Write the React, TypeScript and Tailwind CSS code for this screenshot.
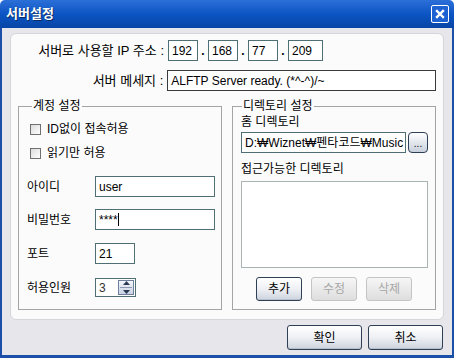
import React from "react";

const font = "font-['Liberation_Sans','Noto_Sans_CJK_KR',sans-serif]";

const Box: React.FC<{ value: string; w: string; dark?: boolean }> = ({ value, w, dark }) => (
  <div
    className={`${w} h-[21px] bg-white border ${dark ? "border-[#3a3a3a]" : "border-[#4f6f74]"} flex items-center px-[3px] text-[12px] text-black leading-none`}
  >
    {value}
  </div>
);

const XpButton: React.FC<{ label: string; w: string; h: string; disabled?: boolean }> = ({ label, w, h, disabled }) => (
  <div
    className={`${w} ${h} rounded-[3px] border flex items-center justify-center text-[12px] ${
      disabled
        ? "border-[#c4c4c4] text-[#a8a8a8] bg-gradient-to-b from-[#f6f6f6] to-[#dedede]"
        : "border-[#2f3f55] text-black bg-gradient-to-b from-[#ffffff] via-[#eef0f4] to-[#cdd3de] shadow-[inset_0_-1px_0_#b8c0cc]"
    }`}
  >
    {label}
  </div>
);

const Check: React.FC<{ label: string }> = ({ label }) => (
  <div className="h-[24px] flex items-center pl-[3px] gap-[6px]">
    <div className="w-[11px] h-[11px] border border-[#707070] bg-gradient-to-br from-[#dcdcdc] to-white" />
    <span>{label}</span>
  </div>
);

const App: React.FC = () => {
  return (
    <div className={`w-[454px] h-[358px] flex flex-col ${font} text-[12px] text-black select-none`}>
      {/* 타이틀 바 */}
      <div className="h-[28px] rounded-t-[5px] bg-gradient-to-b from-[#2b6fd8] via-[#0b55c4] to-[#0845a6] flex items-center justify-between pl-[6px] pr-[5px] shrink-0">
        <span className="text-white font-bold text-[13px] [text-shadow:1px_1px_0_#0a2a66]">서버설정</span>
        <div className="w-[18px] h-[18px] border border-white rounded-[2px] bg-[#1d62d2] flex items-center justify-center">
          <svg width="10" height="10" viewBox="0 0 10 10">
            <path d="M2 2 L8 8 M8 2 L2 8" stroke="white" strokeWidth="2.4" strokeLinecap="square" />
          </svg>
        </div>
      </div>

      {/* 본문 */}
      <div className="flex-1 bg-[#e7e7eb] border-x-[2px] border-b-[3px] border-[#1c4fa8] px-[8px] pt-[5px] flex flex-col">
        <div className="h-[287px] bg-[#fbfbfb] border border-[#d6d6da] rounded-[6px] px-[7px] pt-[6px] flex flex-col">
          <div className="flex items-center h-[21px]">
            <div className="w-[150px] text-right pr-[4px] text-[13px]">서버로 사용할 IP 주소 :</div>
            <Box value="192" w="w-[30px]" />
            <span className="w-[10px] text-center font-bold">.</span>
            <Box value="168" w="w-[30px]" />
            <span className="w-[10px] text-center font-bold">.</span>
            <Box value="77" w="w-[30px]" />
            <span className="w-[10px] text-center font-bold">.</span>
            <Box value="209" w="w-[35px]" />
          </div>
          <div className="flex items-center h-[21px] mt-[9px]">
            <div className="w-[150px] text-right pr-[4px] text-[13px]">서버 메세지 :</div>
            <Box value="ALFTP Server ready. (*^-^)/~" w="w-[270px]" dark />
          </div>

          <div className="flex gap-[10px] mt-[8px]">
            {/* 계정 설정 */}
            <fieldset className="w-[205px] border border-[#a4a4a4] pl-[8px] pr-[6px] pb-[11px]">
              <legend className="px-[1px] ml-[5px] h-[14px] leading-[14px]">계정 설정</legend>
              <div className="mt-[4px]">
                <Check label="ID없이 접속허용" />
                <Check label="읽기만 허용" />
              </div>
              <div className="flex items-center h-[21px] mt-[11px]">
                <span className="w-[68px]">아이디</span>
                <Box value="user" w="w-[120px]" />
              </div>
              <div className="flex items-center h-[21px] mt-[12px]">
                <span className="w-[68px]">비밀번호</span>
                <div className="w-[120px] h-[21px] bg-white border border-[#4f6f74] flex items-center px-[3px] leading-none">
                  ****<span className="w-[1px] h-[13px] bg-black" />
                </div>
              </div>
              <div className="flex items-center h-[21px] mt-[13px]">
                <span className="w-[68px]">포트</span>
                <Box value="21" w="w-[40px]" />
              </div>
              <div className="flex items-center h-[19px] mt-[14px]">
                <span className="w-[68px]">허용인원</span>
                <div className="w-[41px] h-[19px] bg-white border border-[#4f6f74] flex items-center">
                  <span className="flex-1 pl-[3px] text-[#333]">3</span>
                  <div className="w-[16px] h-[15px] mr-[1px] border border-[#6d7f9a] bg-gradient-to-b from-[#f4f6fa] to-[#c9d2e2] flex flex-col items-center justify-center gap-[2px]">
                    <svg width="7" height="4" viewBox="0 0 7 4"><path d="M3.5 0 L7 4 L0 4 Z" fill="#2a3a55" /></svg>
                    <div className="w-[12px] h-[1px] bg-[#8a98b0]" />
                    <svg width="7" height="4" viewBox="0 0 7 4"><path d="M0 0 L7 0 L3.5 4 Z" fill="#2a3a55" /></svg>
                  </div>
                </div>
              </div>
            </fieldset>

            {/* 디렉토리 설정 */}
            <fieldset className="w-[205px] border border-[#a4a4a4] pl-[8px] pr-[6px] pb-[8px]">
              <legend className="px-[1px] ml-[1px] h-[14px] leading-[14px]">디렉토리 설정</legend>
              <div className="h-[16px] mt-[1px] flex items-center">홈 디렉토리</div>
              <div className="flex items-center gap-[2px] mt-[2px]">
                <div className="w-[165px] h-[21px] bg-white border border-[#4f6f74] flex items-center px-[3px] overflow-hidden whitespace-nowrap leading-none">
                  D:₩Wiznet₩펜타코드₩Music
                </div>
                <div className="w-[20px] h-[21px] rounded-[4px] border border-[#2f3f55] bg-gradient-to-b from-white to-[#c8d0dc] flex items-end justify-center pb-[3px] text-[10px] leading-none">
                  ...
                </div>
              </div>
              <div className="h-[16px] mt-[8px] flex items-center">접근가능한 디렉토리</div>
              <div className="w-[187px] h-[87px] mt-[4px] bg-white border border-[#a8b4b4]" />
              <div className="flex justify-center gap-[9px] mt-[9px] pr-[2px]">
                <XpButton label="추가" w="w-[46px]" h="h-[24px]" />
                <XpButton label="수정" w="w-[46px]" h="h-[24px]" disabled />
                <XpButton label="삭제" w="w-[46px]" h="h-[24px]" disabled />
              </div>
            </fieldset>
          </div>
        </div>

        <div className="flex justify-end gap-[6px] mt-[5px] pr-[1px]">
          <XpButton label="확인" w="w-[75px]" h="h-[25px]" />
          <XpButton label="취소" w="w-[75px]" h="h-[25px]" />
        </div>
      </div>
    </div>
  );
};

export default App;
